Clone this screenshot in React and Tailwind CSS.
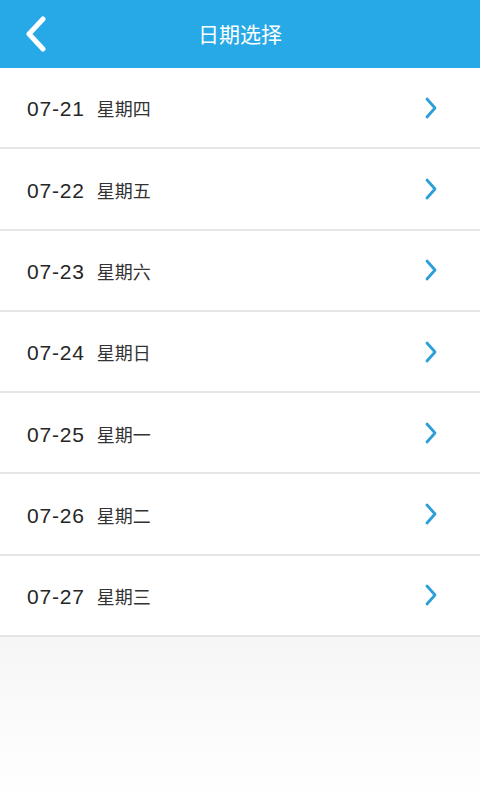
import React from 'react';

const days = [
  { date: '07-21', week: '星期四' },
  { date: '07-22', week: '星期五' },
  { date: '07-23', week: '星期六' },
  { date: '07-24', week: '星期日' },
  { date: '07-25', week: '星期一' },
  { date: '07-26', week: '星期二' },
  { date: '07-27', week: '星期三' },
];

function ChevronRight() {
  return (
    <svg width="14" height="24" viewBox="0 0 14 24" fill="none">
      <path d="M3 3 L11 12 L3 21" stroke="#2b9fd8" strokeWidth="2.8" strokeLinecap="round" strokeLinejoin="round" />
    </svg>
  );
}

export default function App() {
  return (
    <div className="w-[480px] h-[800px] flex flex-col bg-white" style={{ fontFamily: '"Liberation Sans", "Noto Sans CJK SC", sans-serif' }}>
      {/* header */}
      <header className="relative h-[68px] shrink-0 flex items-center justify-center bg-[#28a9e7]">
        <button className="absolute left-[24px] top-[16px]">
          <svg width="24" height="36" viewBox="0 0 24 36" fill="none">
            <path d="M19 3 L5 18 L19 33" stroke="white" strokeWidth="5" strokeLinecap="round" strokeLinejoin="round" />
          </svg>
        </button>
        <h1 className="text-white text-[21px] leading-none">日期选择</h1>
      </header>

      {/* list */}
      <div className="flex flex-col">
        {days.map((d) => (
          <div key={d.date} className="h-[81.3px] flex items-center justify-between pl-[27px] pr-[42px] border-b-2 border-[#e6e6e6] bg-white">
            <div className="flex items-baseline pt-[3px]">
              <span className="text-[21px] text-[#262626] tracking-[0.8px]">{d.date}</span>
              <span className="text-[18px] text-[#333] ml-[12px]">{d.week}</span>
            </div>
            <ChevronRight />
          </div>
        ))}
      </div>

      <div className="flex-1 bg-gradient-to-b from-[#f6f6f6] to-white" />
    </div>
  );
}
